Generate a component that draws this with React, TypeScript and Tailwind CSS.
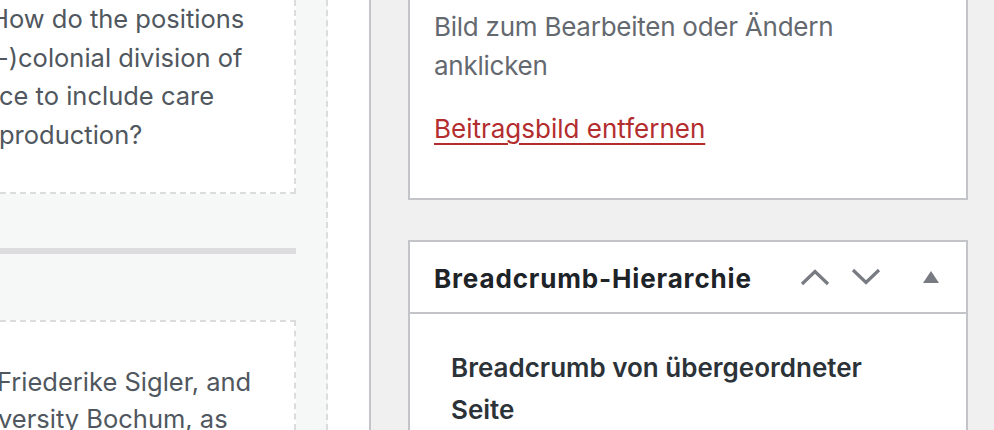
import React from "react";

const font = { fontFamily: "Inter, 'Noto Sans', sans-serif" };

function ChevronUp() {
  return (
    <svg width="30" height="18" viewBox="0 0 30 18" className="block">
      <polyline points="2,16 15,3.5 28,16" fill="none" stroke="#787c82" strokeWidth="3.2" />
    </svg>
  );
}
function ChevronDown() {
  return (
    <svg width="30" height="18" viewBox="0 0 30 18" className="block">
      <polyline points="2,2 15,14.5 28,2" fill="none" stroke="#787c82" strokeWidth="3.2" />
    </svg>
  );
}
function Triangle() {
  return (
    <svg width="18" height="14" viewBox="0 0 18 14" className="block">
      <polygon points="9,1 17,13 1,13" fill="#787c82" />
    </svg>
  );
}

export default function App() {
  return (
    <div className="flex h-[430px] w-[994px] overflow-hidden" style={font}>
      {/* Left editor column */}
      <div className="flex w-[328px] shrink-0 flex-col border-r-2 border-dashed border-[#dcdcde] bg-[#f6f7f7]">
        <div className="w-[296px] overflow-hidden border-r-2 border-b-2 border-dashed border-[#dcdcde] bg-white pb-[38px] text-[25.5px] leading-[38.5px] text-[#50575e]">
          <div className="-ml-[10px] whitespace-nowrap">How do the positions</div>
          <div className="-ml-[3px] whitespace-nowrap">-)colonial division of</div>
          <div className="-ml-[1px] whitespace-nowrap">ce to include care</div>
          <div className="-ml-[1px] whitespace-nowrap">production?</div>
        </div>
        <div className="mt-[54px] h-[6px] w-[296px] bg-[#dcdcde]" />
        <div className="mt-[66px] w-[296px] flex-1 overflow-hidden border-t-2 border-r-2 border-dashed border-[#dcdcde] bg-white pt-[41px] text-[25.5px] leading-[37px] text-[#50575e]">
          <div className="-ml-[3px] whitespace-nowrap">Friederike Sigler, and</div>
          <div className="-ml-[2px] whitespace-nowrap">versity Bochum, as</div>
        </div>
      </div>

      {/* White strip */}
      <div className="w-[41px] shrink-0 bg-white" />
      <div className="w-[2px] shrink-0 bg-[#c3c4c7]" />

      {/* Sidebar */}
      <div className="flex-1 bg-[#f0f0f1] pl-[37px]">
        <div className="w-[560px] border-x-2 border-b-2 border-[#c3c4c7] bg-white px-[24px] pt-[7px] pb-[50px]">
          <p className="text-[26px] leading-[39px] tracking-[-0.25px] text-[#646970]">
            Bild zum Bearbeiten oder Ändern
            <br />
            anklicken
          </p>
          <p className="mt-[24px] text-[26px] leading-[39px]">
            <a className="text-[#b32d2e] underline decoration-2 underline-offset-[5px]" href="#">
              Beitragsbild entfernen
            </a>
          </p>
        </div>

        <div className="mt-[40px] w-[560px] border-2 border-b-0 border-[#c3c4c7] bg-white">
          <div className="flex h-[72px] items-center border-b-2 border-[#c3c4c7] pl-[24px] pr-[26px]">
            <h2 className="flex-1 pt-[2px] text-[26px] font-bold tracking-[0.85px] text-[#1d2327]">Breadcrumb-Hierarchie</h2>
            <div className="flex items-center gap-[21px]">
              <ChevronUp />
              <ChevronDown />
              <div className="ml-[20px]">
                <Triangle />
              </div>
            </div>
          </div>
          <div className="pl-[41px] pt-[33px] text-[26px] font-semibold leading-[42px] text-[#2c3338]">
            Breadcrumb von übergeordneter
            <br />
            Seite
          </div>
        </div>
      </div>
    </div>
  );
}
